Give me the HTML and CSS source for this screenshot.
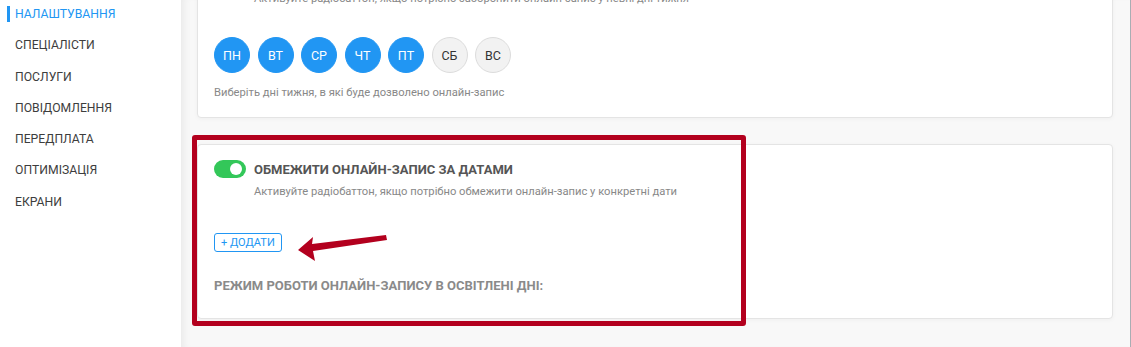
FILE: index.html
```html
<!DOCTYPE html>
<html lang="uk">
<head>
  <meta charset="UTF-8" />
  <meta name="viewport" content="width=device-width, initial-scale=1.0"/>
  <title>Налаштування</title>
  <link rel="stylesheet" href="styles.css">
</head>
<body>
  <div class="layout">
    <nav class="sidebar">
      <a class="nav-item active">НАЛАШТУВАННЯ</a>
      <a class="nav-item">СПЕЦІАЛІСТИ</a>
      <a class="nav-item">ПОСЛУГИ</a>
      <a class="nav-item">ПОВІДОМЛЕННЯ</a>
      <a class="nav-item">ПЕРЕДПЛАТА</a>
      <a class="nav-item">ОПТИМІЗАЦІЯ</a>
      <a class="nav-item">ЕКРАНИ</a>
    </nav>

    <main class="main">
      <section class="card card-days">
        <div class="switch-row">
          <span class="toggle on"><span class="knob"></span></span>
          <span class="switch-title">ОБМЕЖИТИ ОНЛАЙН-ЗАПИС ЗА ДНЯМИ ТИЖНЯ</span>
        </div>
        <p class="switch-desc">Активуйте радіобаттон, якщо потрібно заборонити онлайн-запис у певні дні тижня</p>

        <div class="days">
          <span class="day on">ПН</span>
          <span class="day on">ВТ</span>
          <span class="day on">СР</span>
          <span class="day on">ЧТ</span>
          <span class="day on">ПТ</span>
          <span class="day">СБ</span>
          <span class="day">ВС</span>
        </div>
        <p class="hint">Виберіть дні тижня, в які буде дозволено онлайн-запис</p>
      </section>

      <section class="card card-dates">
        <div class="switch-row">
          <span class="toggle on"><span class="knob"></span></span>
          <span class="switch-title">ОБМЕЖИТИ ОНЛАЙН-ЗАПИС ЗА ДАТАМИ</span>
        </div>
        <p class="switch-desc">Активуйте радіобаттон, якщо потрібно обмежити онлайн-запис у конкретні дати</p>

        <button class="add-btn">+ ДОДАТИ</button>

        <h3 class="mode-title">РЕЖИМ РОБОТИ ОНЛАЙН-ЗАПИСУ В ОСВІТЛЕНІ ДНІ:</h3>

        <div class="highlight"></div>
        <svg class="arrow" width="200" height="30" viewBox="0 0 200 30">
          <polygon points="2,15 17,2 16,9 90,0 91,5 17,16 19,26" fill="#b3001e"/>
        </svg>
      </section>
    </main>
  </div>
</body>
</html>
```

FILE: styles.css
```css
html, body {
  margin: 0;
  height: 100%;
}

body {
  font-family: Roboto, "Liberation Sans", Arial, sans-serif;
  background: #fff;
  overflow: hidden;
}

.layout {
  display: flex;
  height: 100%;
}

.sidebar {
  width: 181px;
  flex-shrink: 0;
  background: #fff;
  display: flex;
  flex-direction: column;
  padding-top: 6px;
}

.nav-item {
  display: block;
  font-size: 12.2px;
  line-height: 16px;
  color: #3d3d3d;
  margin: 0 0 15.3px 7px;
  padding-left: 5px;
  border-left: 3px solid transparent;
}

.nav-item.active {
  color: #2196f3;
  border-left-color: #2196f3;
}

.main {
  flex: 1;
  background: #f8f8f8;
  padding: 0 17px 0 16px;
  box-shadow: inset 8px 0 8px -6px rgba(0, 0, 0, 0.07);
  border-right: 1px solid #a9adb3;
}

.card {
  position: relative;
  background: #fff;
  border: 1px solid #e4e4e4;
  border-radius: 4px;
  box-shadow: 0 1px 4px rgba(0, 0, 0, 0.04);
  padding: 15px 16px 16px;
}

.card-days {
  margin-top: -49px;
}

.card-dates {
  margin-top: 26px;
  padding-bottom: 24px;
}

.switch-row {
  display: flex;
  align-items: center;
  gap: 8px;
  height: 18px;
}

.toggle {
  width: 32px;
  height: 18px;
  border-radius: 9px;
  background: #d0d0d0;
  position: relative;
  flex-shrink: 0;
}

.toggle.on {
  background: #33c759;
}

.knob {
  position: absolute;
  top: 3px;
  right: 4px;
  width: 12px;
  height: 12px;
  border-radius: 50%;
  background: #fff;
}

.switch-title {
  font-size: 13px;
  font-weight: bold;
  color: #555;
}

.switch-desc {
  margin: 6px 0 0 40px;
  font-size: 11.2px;
  line-height: 16px;
  color: #888;
}

.days {
  display: flex;
  gap: 7.5px;
  margin-top: 30px;
}

.day {
  width: 36px;
  height: 36px;
  box-sizing: border-box;
  border-radius: 50%;
  background: #f2f2f2;
  border: 1px solid #dcdcdc;
  color: #333;
  font-size: 12.5px;
  display: flex;
  align-items: center;
  justify-content: center;
}

.day.on {
  background: #2196f3;
  border-color: #2196f3;
  color: #fff;
}

.hint {
  margin: 12px 0 0;
  font-size: 11.2px;
  line-height: 16px;
  color: #888;
}

.add-btn {
  display: block;
  margin-top: 33px;
  height: 19px;
  padding: 0 6px;
  background: #fff;
  border: 1px solid #2196f3;
  border-radius: 3px;
  color: #2196f3;
  font-family: inherit;
  font-size: 11px;
  line-height: 17px;
}

.mode-title {
  margin: 26px 0 0;
  font-size: 13px;
  line-height: 16px;
  font-weight: bold;
  color: #8a8a8a;
}

.highlight {
  position: absolute;
  left: -6px;
  top: -10px;
  width: 544px;
  height: 181px;
  border: 5px solid #b3001e;
  border-radius: 3px;
  pointer-events: none;
}

.arrow {
  position: absolute;
  left: 98px;
  top: 90px;
}
```
